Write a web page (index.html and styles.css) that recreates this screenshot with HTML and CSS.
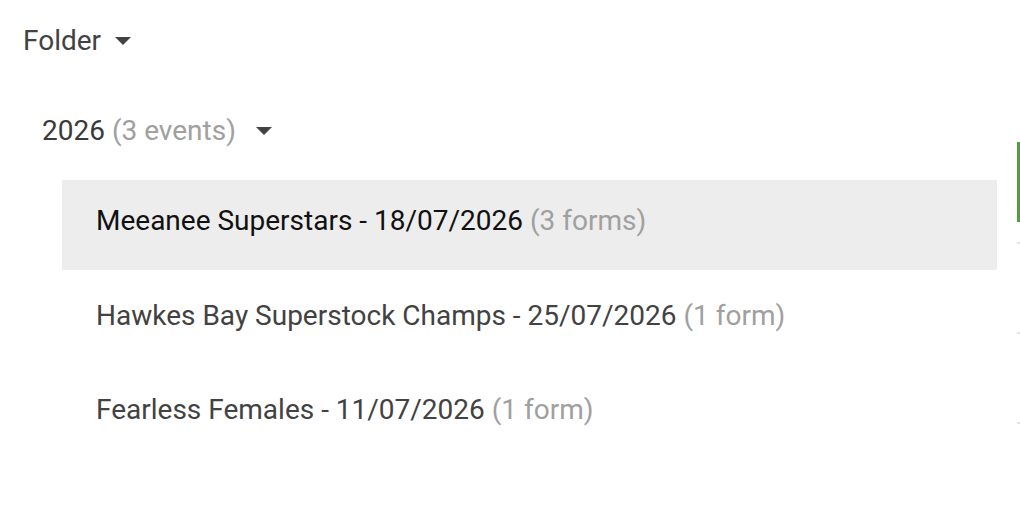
FILE: index.html
```html
<!DOCTYPE html>
<html lang="en">
<head>
  <meta charset="UTF-8" />
  <meta name="viewport" content="width=device-width, initial-scale=1.0" />
  <title>Events</title>
  <link rel="stylesheet" href="styles.css">
</head>
<body>

  <div class="layout">
    <div class="tree">
      <div class="folder-head">
        <span class="label">Folder</span>
        <span class="caret"></span>
      </div>

      <div class="year-head">
        <span class="label">2026 <span class="count">(3 events)</span></span>
        <span class="caret caret-year"></span>
      </div>

      <div class="events">
        <div class="event-row active">Meeanee Superstars - 18/07/2026 <span class="count">(3 forms)</span></div>
        <div class="event-row">Hawkes Bay Superstock Champs - 25/07/2026 <span class="count">(1 form)</span></div>
        <div class="event-row">Fearless Females - 11/07/2026 <span class="count">(1 form)</span></div>
      </div>
    </div>

    <!-- edge of the next panel -->
    <div class="side-strip">
      <div class="side-bar"></div>
      <div class="side-tick"></div>
      <div class="side-tick"></div>
      <div class="side-tick"></div>
    </div>
  </div>

</body>
</html>
```

FILE: styles.css
```css
body {
  font-family: Roboto, "Noto Sans", Arial, sans-serif;
  margin: 0;
  padding: 0;
  background: #fff;
  color: #424242;
}

.layout {
  display: flex;
  width: 1020px;
  height: 522px;
  overflow: hidden;
}

.tree {
  flex: 1;
  padding-top: 25px;
  font-size: 28px;
  line-height: 32px;
}

.folder-head {
  display: flex;
  align-items: center;
  padding-left: 23px;
}

.year-head {
  display: flex;
  align-items: center;
  padding-left: 42px;
  margin-top: 58px;
  color: #3a3a3a;
}

.caret {
  width: 0;
  height: 0;
  border-left: 8px solid transparent;
  border-right: 8px solid transparent;
  border-top: 8px solid #424242;
  margin-left: 14px;
}

.caret-year {
  margin-left: 20px;
}

.count {
  color: #a0a0a0;
}

.events {
  display: flex;
  flex-direction: column;
  gap: 4.5px;
  margin-top: 33px;
  margin-left: 62px;
  margin-right: 20px;
}

.event-row {
  padding: 25px 34px 33px;
  white-space: nowrap;
}

.event-row.active {
  background: #ededed;
  color: #111;
}

.side-strip {
  width: 3px;
  display: flex;
  flex-direction: column;
}

.side-bar {
  margin-top: 142px;
  height: 80px;
  background: #559a45;
}

.side-tick {
  height: 2px;
  margin-top: 88px;
  background: #e2e2e2;
}

.side-bar + .side-tick {
  margin-top: 20px;
}
```
